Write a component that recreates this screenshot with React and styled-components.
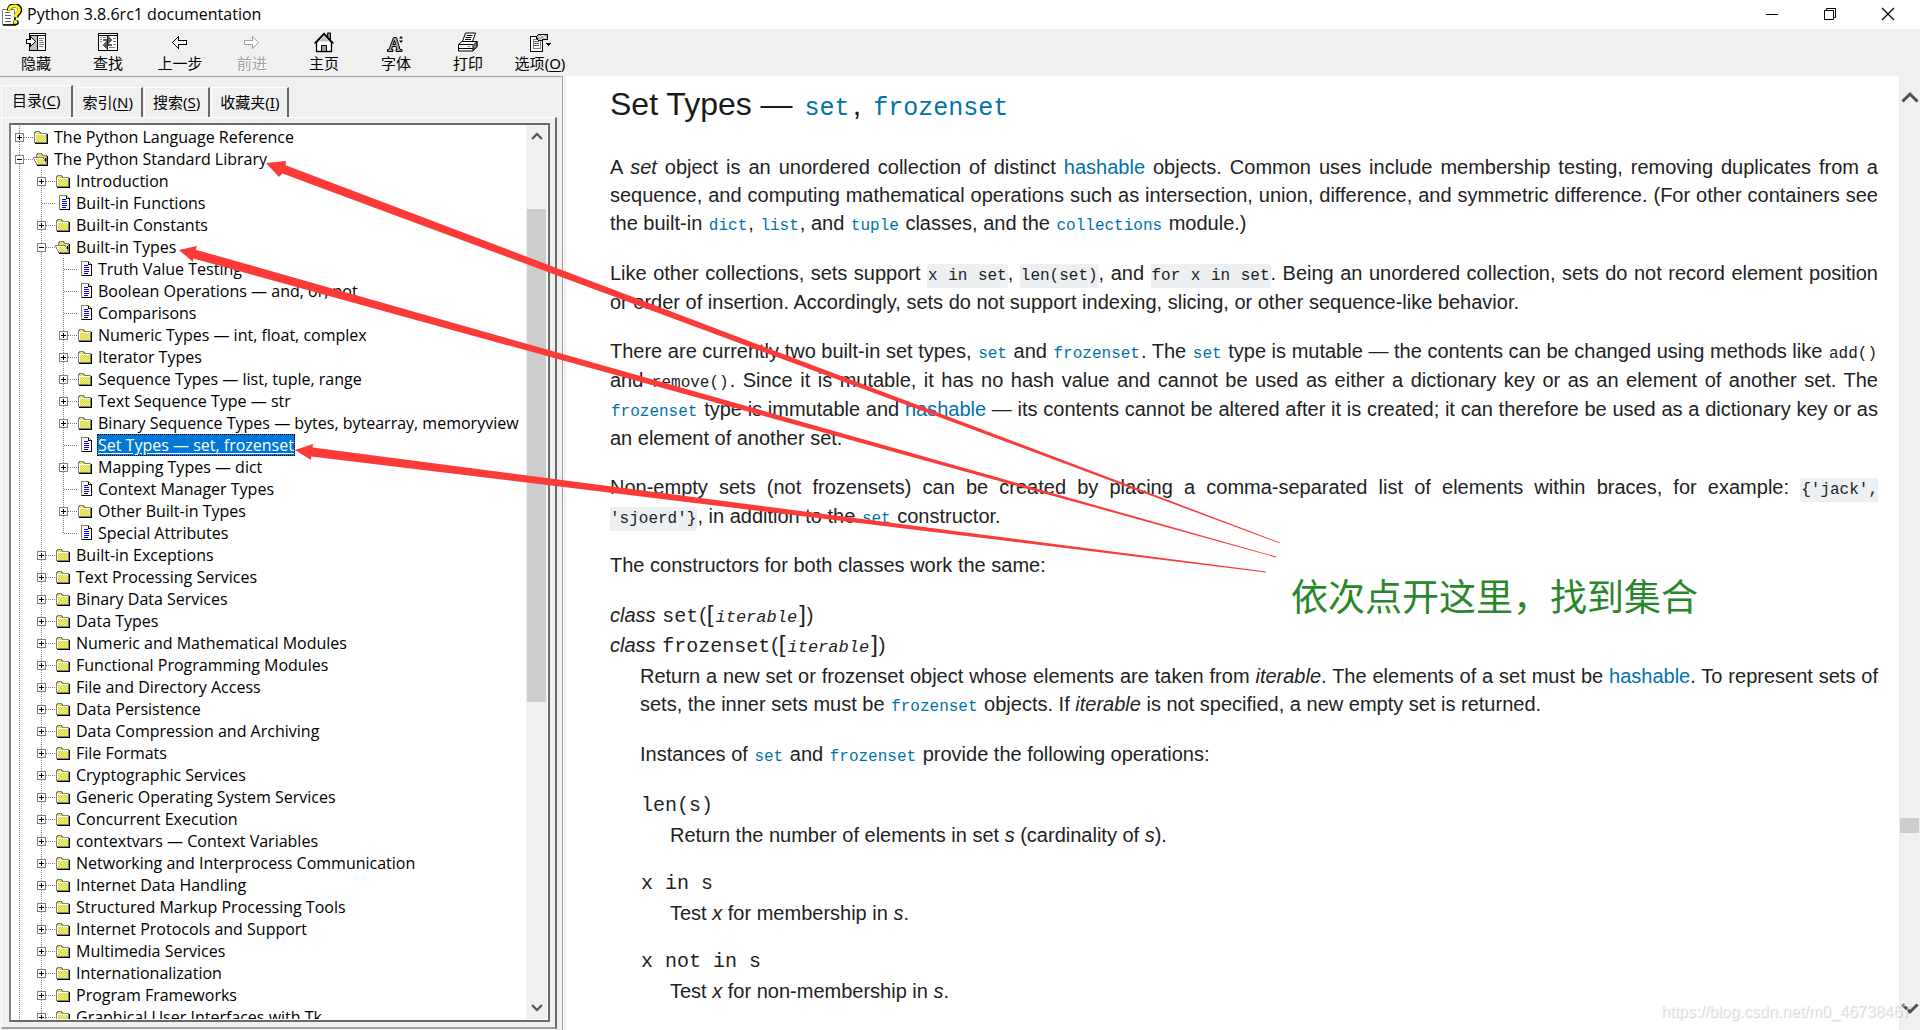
import React, { useState } from "react";
import styled, { createGlobalStyle } from "styled-components";

const GlobalStyle = createGlobalStyle`
    *, *::before, *::after {
        box-sizing: border-box;
    }
    body {
        margin: 0;
        overflow: hidden;
        background: #fff;
        --ui-font: "Noto Sans", "Noto Sans CJK SC", sans-serif;
        --label-font: "Open Sans", "Noto Sans CJK SC", sans-serif;
        --doc-font: "Liberation Sans", Arial, sans-serif;
        --code-font: "Liberation Mono", monospace;
        --color-face: #f0f0f0;
        --color-shadow: #a0a0a0;
        --color-dark: #696969;
        --color-link: #0072aa;
    }
    button {
        border: none;
        padding: 0;
        background: transparent;
        color: inherit;
        font: inherit;
    }
`;

const Window = styled.div`
    position: relative;
    display: flex;
    flex-direction: column;
    height: 100vh;
    overflow: hidden;
    font-family: var(--ui-font);
    font-size: 15px;
    color: #000;
`;

/* title bar */

const TitleBar = styled.header`
    display: flex;
    align-items: center;
    flex: 0 0 29px;
    padding-right: 3px;
    padding-left: 2px;
    background: #fff;
`;

const Title = styled.h1`
    flex: 1;
    margin: 0 0 2px 5px;
    font-family: var(--label-font);
    font-size: 16px;
    line-height: 20px;
    font-weight: 400;
`;

const WindowButton = styled.button`
    display: flex;
    align-items: center;
    justify-content: center;
    width: 58px;
    height: 29px;
    padding-bottom: 2px;
`;

/* toolbar */

const Toolbar = styled.div`
    display: flex;
    flex: 0 0 47px;
    background: var(--color-face);
`;

const ToolButton = styled.button`
    display: flex;
    flex-direction: column;
    align-items: center;
    width: 72px;
    padding-top: 2px;
    line-height: 20px;
    white-space: nowrap;
    color: ${({ disabled }) => (disabled ? "#a0a0a0" : "#000")};
    text-shadow: ${({ disabled }) => (disabled ? "1px 1px 0 #fff" : "none")};
`;

const Key = styled.span`
    text-decoration: underline;
    text-underline-offset: 2px;
`;

/* panes */

const Main = styled.div`
    display: flex;
    flex: 1;
    min-height: 0;
`;

const NavPane = styled.nav`
    display: flex;
    flex-direction: column;
    flex: 0 0 563px;
    padding: 8px 5px 1px 1px;
    border-top: 1px solid var(--color-shadow);
    border-right: 1px solid var(--color-shadow);
    background: var(--color-face);
`;

const Splitter = styled.div`
    flex: 0 0 3px;
    border-left: 1px solid #fff;
    background: var(--color-face);
`;

const TabList = styled.div`
    display: flex;
    align-items: flex-end;
    height: 32px;
`;

const Tab = styled.button`
    height: ${({ $active }) => ($active ? 32 : 30)}px;
    margin-right: 1px;
    padding: 0 ${({ $active }) => ($active ? "10px 4px" : "8px 2px")};
    border-top: 1px solid #fff;
    border-left: 1px solid #fff;
    border-right: 2px solid var(--color-dark);
    line-height: 26px;
    white-space: nowrap;
`;

const TabPanel = styled.div`
    flex: 1;
    min-height: 0;
    padding: 5px 5px 5px 7px;
    border-top: 1px solid #fff;
    border-left: 1px solid #fff;
    border-right: 2px solid var(--color-dark);
    border-bottom: 2px solid var(--color-shadow);
`;

const TreeBox = styled.div`
    display: flex;
    height: 100%;
    padding: 0 1px 1px 0;
    border: 2px solid var(--color-dark);
    border-left-color: #808080;
    background: #fff;
    overflow: hidden;
`;

const TreeList = styled.ul`
    flex: 1;
    min-width: 0;
    margin: 0;
    padding: 1px 0 0;
    list-style: none;
    overflow: hidden;
`;

const TreeRow = styled.li`
    display: flex;
    height: 22px;
`;

const TreeIconSlot = styled.span`
    flex: 0 0 20px;
    height: 22px;
`;

const TreeLabel = styled.button`
    height: 22px;
    padding: 0 1px;
    font-family: var(--label-font);
    font-size: 16px;
    line-height: 22px;
    white-space: nowrap;
    color: ${({ $selected }) => ($selected ? "#fff" : "#000")};
    background: ${({ $selected }) => ($selected ? "#0078d7" : "transparent")};
    outline: ${({ $selected }) => ($selected ? "1px dotted #000" : "none")};
    outline-offset: -1px;
    text-decoration: ${({ $selected }) => ($selected ? "underline" : "none")};
    text-underline-offset: 2px;
`;

const Scrollbar = styled.div`
    display: flex;
    flex-direction: column;
    align-items: center;
    flex: 0 0 ${({ $width }) => $width}px;
    background: var(--color-face);
`;

const ScrollButton = styled.button`
    display: flex;
    align-items: center;
    justify-content: center;
    width: 100%;
    height: ${({ $size }) => $size}px;
`;

const ScrollTrack = styled.div`
    display: flex;
    flex-direction: column;
    flex: 1;
    width: 100%;
    padding: 0 1px;
`;

const ScrollSpace = styled.div`
    flex: ${({ $grow }) => $grow};
`;

const ScrollThumb = styled.div`
    flex: ${({ $grow }) => $grow};
    background: #cdcdcd;
`;

/* document */

const DocPane = styled.main`
    flex: 1;
    min-width: 0;
    padding: 6px 21px 0 44px;
    overflow: hidden;
    background: #fff;
    color: #222;
    font-family: var(--doc-font);
    font-size: 20px;
    line-height: 28px;
    text-align: justify;
`;

const DocTitle = styled.h2`
    margin: 0 0 27px;
    font-size: 32px;
    line-height: 44px;
    font-weight: 400;
    color: #1a1a1a;
`;

const Paragraph = styled.p`
    margin: 0 0 ${({ $loose }) => ($loose ? 20 : 22)}px;
    line-height: ${({ $loose }) => ($loose ? 29 : 28)}px;
`;

const Link = styled.a`
    color: var(--color-link);
    text-decoration: none;
`;

const Code = styled.code`
    padding: 0 1px;
    font-family: var(--code-font);
    font-size: 16px;
    line-height: 20px;
`;

const CodeBox = styled(Code)`
    padding: 3px 1px;
    border-radius: 3px;
    background: #ecf0f3;
`;

const TitleCode = styled.code`
    padding: 0 3px;
    font-family: var(--code-font);
    font-size: 25px;
    line-height: 30px;
`;

const Definition = styled.dl`
    margin: 0 0 18px;
`;

const Signature = styled.dt`
    line-height: 30px;
    text-align: left;
`;

const Name = styled.code`
    padding: 0 1px;
    font-family: var(--code-font);
    font-size: 20px;
    line-height: 20px;
`;

const Bracket = styled.span`
    padding: 0 1px;
    font-size: 24px;
    line-height: 20px;
`;

const Param = styled.em`
    padding: 0 1px;
    font-family: var(--code-font);
    font-size: 17px;
    line-height: 20px;
`;

const Description = styled.dd`
    margin: 0 0 0 30px;
    padding-top: 2px;
`;

/* annotations */

const Arrows = styled.svg`
    position: absolute;
    top: 0;
    left: 0;
    pointer-events: none;
`;

const Note = styled.p`
    position: absolute;
    top: 568px;
    left: 1291px;
    margin: 0;
    font-family: "Noto Sans CJK SC", sans-serif;
    font-size: 37px;
    line-height: 54px;
    white-space: nowrap;
    color: #2a862a;
`;

const Watermark = styled.span`
    position: absolute;
    right: 9px;
    bottom: 8px;
    font-family: var(--doc-font);
    font-size: 16px;
    line-height: 20px;
    color: rgba(255, 255, 255, 0.7);
    text-shadow: 1px 1px 1px rgba(0, 0, 0, 0.2);
`;

function HelpIcon() {
    return (
        <svg width="20" height="22" viewBox="0 0 20 22">
            <path d="M.5 5.500h12v15H.5z" fill="#fff" stroke="#808080" />
            <path d="M13 9v12H1" fill="none" stroke="#000" strokeWidth="1.500" />
            <path d="M3 8.500h5M3 11.500h6M3 14.500h6M3 17.500h6" stroke="#606060" />
            <path d="M7 6.500C7 3 9.500 1.500 12.500 1.500S18 3.200 18 6c0 2.500-1.800 3.500-3.600 5v2.500" fill="none" stroke="#000" strokeWidth="4.600" />
            <circle cx="14" cy="18.500" r="2.800" fill="#000" />
            <path d="M7.300 6.500C7.300 3.500 9.500 2 12.300 2s5 1.700 5 4c0 2.300-1.800 3.200-3.600 4.700v2.500" fill="none" stroke="#fff200" strokeWidth="3.200" />
            <circle cx="13.500" cy="18" r="2" fill="#fff200" />
        </svg>
    );
}

function HideIcon() {
    return (
        <svg width="24" height="22" viewBox="0 0 24 22" shapeRendering="crispEdges">
            <path d="M5 2h17v18H5z" fill="#000" />
            <path d="M6 5h7v14H6z" fill="#c0c0c0" />
            <path d="M14 5h7v14h-7zM6 3h15v1H6z" fill="#fff" />
            <path d="M15 7h5v1h-5zM15 9h4v1h-4zM15 11h5v1h-5zM15 13h5v1h-5zM15 15h4v1h-4z" fill="#808080" />
            <path d="M2.500 8.500h4v-3l5 5-5 5v-3h-4z" fill="#fff" stroke="#000" />
        </svg>
    );
}

function LocateIcon() {
    return (
        <svg width="24" height="22" viewBox="0 0 24 22" shapeRendering="crispEdges">
            <path d="M2 2h20v18H2z" fill="#000" />
            <path d="M3 5h8v14H3zM12 5h9v14h-9zM3 3h18v1H3z" fill="#fff" />
            <path d="M4 6h2v1H4zM7 6h3v1H7zM4 8h2v1H4zM4 10h2v1H4zM13 13h3v1h-3zM17 10h3v1h-3zM17 7h3v1h-3zM13 16h6v1h-6zM17 13h3v1h-3z" fill="#808080" />
            <path d="M7 8h5V5l5 4-5 4v-3H7zM16 15h-5v3l-5-4 5-4v3h5z" fill="#606060" />
            <path d="M11 5h1v14h-1z" fill="#202020" />
        </svg>
    );
}

function ArrowIcon({ forward }) {
    return (
        <svg width="24" height="22" viewBox="0 0 24 22" shapeRendering="crispEdges">
            <path
                d={forward
                    ? "M4.500 9.500h8v-4l6 6-6 6v-4h-8z"
                    : "M18.500 9.500h-8v-4l-6 6 6 6v-4h8z"}
                fill="#fff"
                stroke={forward ? "#a0a0a0" : "#000"}
            />
        </svg>
    );
}

function HomeIcon() {
    return (
        <svg width="24" height="22" viewBox="0 0 24 22">
            <path d="M15.500 2h3v7h-3z" fill="#808080" stroke="#000" />
            <path d="M4.500 11.500L12 3l7.500 8.500v9h-15z" fill="#fff" stroke="#000" strokeWidth="1.300" />
            <path d="M2.500 12.500L12 2.500l9.500 10" fill="none" stroke="#000" strokeWidth="1.300" />
            <path d="M7 10.500l5-5.500 5 5.500z" fill="#c0c0c0" />
            <path d="M9.500 14.500h5v6h-5z" fill="#a0a0a0" stroke="#000" />
        </svg>
    );
}

function FontIcon() {
    return (
        <svg width="24" height="22" viewBox="0 0 24 22">
            <path d="M3.500 20.500v-2h1.500l4.500-12h3l3.500 12h2v2h-6v-2h1l-1-3H8.500l-1 3h1.500v2z" fill="#a8a8a8" stroke="#000" />
            <path d="M10.500 9.500l-1.500 4h2.500z" fill="#f0f0f0" stroke="#000" />
            <path d="M15 7.500L17 5l2 2.500zM15 9.500h4l-2 2.500z" fill="#000" />
        </svg>
    );
}

function PrintIcon() {
    return (
        <svg width="24" height="22" viewBox="0 0 24 22">
            <path d="M6.500 10.500l3-8.500h10l-3 8.500z" fill="#fff" stroke="#000" />
            <path d="M10.500 4.500h6M9.500 6.500h6M9 8.500h6" stroke="#000" />
            <path d="M2.500 13.500l3.500-3h15v5l-4 4.500h-14.500z" fill="#fff" stroke="#000" />
            <path d="M17 14.500l4-4v5l-4 4.500z" fill="#808080" stroke="#000" />
            <path d="M2.500 13.500h14.500M2.500 17.500h14.500" stroke="#000" />
            <path d="M11.500 15.500h3" stroke="#808080" />
        </svg>
    );
}

function OptionsIcon() {
    return (
        <svg width="24" height="22" viewBox="0 0 24 22" shapeRendering="crispEdges">
            <path d="M2.500 5.500h12v15h-12z" fill="#fff" stroke="#000" />
            <path d="M14 6h1v15H3v-1h11z" fill="#000" />
            <path d="M5 8.500h7v9H5z" fill="#fff" stroke="#808080" />
            <path d="M6 10.500h5M6 12.500h5M6 14.500h5" stroke="#606060" />
            <path d="M8 6l3-3h8v5h-4l-2 2-3-1z" fill="#b8b8b8" stroke="#000" />
            <path d="M11 5h2v1h-2zM14 4h2v1h-2zM16 6h2v1h-2z" fill="#fff" />
            <path d="M18 12h5v1h-1v1h-1v1h-1v-1h-1v-1h-1z" fill="#000" />
        </svg>
    );
}

function Chevron({ up, size = 12, weight = 2 }) {
    return (
        <svg width={size} height={size} viewBox="0 0 12 12">
            <path d={up ? "M1 9l5-5 5 5" : "M1 3l5 5 5-5"} fill="none" stroke="#505050" strokeWidth={weight} />
        </svg>
    );
}

function FolderIcon({ open }) {
    return (
        <svg width="20" height="22" viewBox="0 0 20 22" shapeRendering="crispEdges">
            <defs>
                <pattern id="dither" width="2" height="2" patternUnits="userSpaceOnUse">
                    <path d="M0 0h2v2H0z" fill="#ffff00" />
                    <path d="M0 0h1v1H0zM1 1h1v1H1z" fill="#c8c8c0" />
                </pattern>
            </defs>
            {open ? (
                <>
                    <path d="M3.500 16.500v-9l1-2h4l1 2h4v9z" fill="url(#dither)" stroke="#808080" />
                    <path d="M.5 9.500h10l3 7h-10z" fill="#fff" stroke="#808080" />
                    <path d="M3 11h7l3 5H5z" fill="url(#dither)" />
                    <path d="M14 8h1v10H4v-1h10zM12 10h1v3h-1z" fill="#000" />
                </>
            ) : (
                <>
                    <path d="M1.500 16.500v-9l1-2h4l1 2h6v9z" fill="url(#dither)" stroke="#808080" />
                    <path d="M2 8h11v1H2zM2 8h1v8H2z" fill="#fff" />
                    <path d="M14 8h1v10H2v-1h12z" fill="#000" />
                </>
            )}
        </svg>
    );
}

function PageIcon() {
    return (
        <svg width="20" height="22" viewBox="0 0 20 22" shapeRendering="crispEdges">
            <path d="M4.500 3.500h7l3 3v11h-10z" fill="#fff" stroke="#808080" />
            <path d="M11 4h1v2h2v1h-3zM14 6h1v12H5v-1h9z" fill="#000" />
            <path d="M6 5h1v1H6zM9 4h1v1H9zM5 8h1v1H5zM5 12h1v1H5zM6 15h1v1H6zM12 8h1v1h-1zM12 12h1v1h-1z" fill="#ffff00" />
            <path d="M7 7h4v1H7zM7 9h5v1H7zM7 11h5v1H7zM7 13h5v1H7zM7 15h4v1H7z" fill="#0000ff" />
        </svg>
    );
}

// one 22px cell of the dotted connector lines, with the +/- box where the node has one
function Branch({ line = "full", stub, box }) {
    const paths = { full: "M8.500 0V22", end: "M8.500 0V12" };
    return (
        <svg width="22" height="22" viewBox="0 0 22 22" shapeRendering="crispEdges">
            <path d={paths[line]} stroke="#808080" strokeDasharray="1 1" />
            {stub && <path d="M9 11.500H22" stroke="#808080" strokeDasharray="1 1" />}
            {box && (
                <>
                    <path d="M4.500 7.500h8v8h-8z" fill="#fff" stroke="#808080" />
                    <path d={box === "+" ? "M6 11.500h5M8.500 9v5" : "M6 11.500h5"} stroke="#000" />
                </>
            )}
        </svg>
    );
}

// level, kind, label
const ROWS = [
    [0, "folder", "The Python Language Reference"],
    [0, "open", "The Python Standard Library"],
    [1, "folder", "Introduction"],
    [1, "page", "Built-in Functions"],
    [1, "folder", "Built-in Constants"],
    [1, "open", "Built-in Types"],
    [2, "page", "Truth Value Testing"],
    [2, "page", "Boolean Operations — and, or, not"],
    [2, "page", "Comparisons"],
    [2, "folder", "Numeric Types — int, float, complex"],
    [2, "folder", "Iterator Types"],
    [2, "folder", "Sequence Types — list, tuple, range"],
    [2, "folder", "Text Sequence Type — str"],
    [2, "folder", "Binary Sequence Types — bytes, bytearray, memoryview"],
    [2, "page", "Set Types — set, frozenset"],
    [2, "folder", "Mapping Types — dict"],
    [2, "page", "Context Manager Types"],
    [2, "folder", "Other Built-in Types"],
    [2, "page", "Special Attributes"],
    [1, "folder", "Built-in Exceptions"],
    [1, "folder", "Text Processing Services"],
    [1, "folder", "Binary Data Services"],
    [1, "folder", "Data Types"],
    [1, "folder", "Numeric and Mathematical Modules"],
    [1, "folder", "Functional Programming Modules"],
    [1, "folder", "File and Directory Access"],
    [1, "folder", "Data Persistence"],
    [1, "folder", "Data Compression and Archiving"],
    [1, "folder", "File Formats"],
    [1, "folder", "Cryptographic Services"],
    [1, "folder", "Generic Operating System Services"],
    [1, "folder", "Concurrent Execution"],
    [1, "folder", "contextvars — Context Variables"],
    [1, "folder", "Networking and Interprocess Communication"],
    [1, "folder", "Internet Data Handling"],
    [1, "folder", "Structured Markup Processing Tools"],
    [1, "folder", "Internet Protocols and Support"],
    [1, "folder", "Multimedia Services"],
    [1, "folder", "Internationalization"],
    [1, "folder", "Program Frameworks"],
    [1, "folder", "Graphical User Interfaces with Tk"],
];

const TOOLS = [
    { label: "隐藏", icon: <HideIcon /> },
    { label: "查找", icon: <LocateIcon /> },
    { label: "上一步", icon: <ArrowIcon /> },
    { label: "前进", icon: <ArrowIcon forward />, disabled: true },
    { label: "主页", icon: <HomeIcon /> },
    { label: "字体", icon: <FontIcon /> },
    { label: "打印", icon: <PrintIcon /> },
    { label: "选项", icon: <OptionsIcon />, hotkey: "O" },
];

const TABS = [
    ["目录", "C"],
    ["索引", "N"],
    ["搜索", "S"],
    ["收藏夹", "I"],
];

function Tree() {
    const [selected, setSelected] = useState("Set Types — set, frozenset");
    return (
        <TreeList>
            {ROWS.map(([level, kind, label], index) => {
                const next = ROWS[index + 1];
                const isLast = level === 2 && next[0] < 2;
                const box = { folder: "+", open: "-" }[kind];
                return (
                    <TreeRow key={label}>
                        {Array.from({ length: level }, (_, i) => <Branch key={i} />)}
                        <Branch line={isLast ? "end" : "full"} stub box={box} />
                        <TreeIconSlot>
                            {kind === "page" ? <PageIcon /> : <FolderIcon open={kind === "open"} />}
                        </TreeIconSlot>
                        <TreeLabel $selected={label === selected} onClick={() => setSelected(label)}>
                            {label}
                        </TreeLabel>
                    </TreeRow>
                );
            })}
        </TreeList>
    );
}

function CodeLink({ children }) {
    return <Link href="#"><Code>{children}</Code></Link>;
}

function Constructor({ name }) {
    return (
        <Signature>
            <em>class</em> <Name>{name}</Name>(<Bracket>[</Bracket>
            <Param>iterable</Param>
            <Bracket>]</Bracket>)
        </Signature>
    );
}

function Document() {
    return (
        <DocPane>
            <DocTitle>
                Set Types — <Link href="#"><TitleCode>set</TitleCode></Link>, <Link href="#"><TitleCode>frozenset</TitleCode></Link>
            </DocTitle>
            <Paragraph>
                A <em>set</em> object is an unordered collection of distinct <Link href="#">hashable</Link> objects.
                Common uses include membership testing, removing duplicates from a sequence, and computing
                mathematical operations such as intersection, union, difference, and symmetric difference.
                (For other containers see the built-in <CodeLink>dict</CodeLink>, <CodeLink>list</CodeLink>,
                and <CodeLink>tuple</CodeLink> classes, and the <CodeLink>collections</CodeLink> module.)
            </Paragraph>
            <Paragraph $loose>
                Like other collections, sets support <CodeBox>x in set</CodeBox>, <CodeBox>len(set)</CodeBox>,
                and <CodeBox>for x in set</CodeBox>. Being an unordered collection, sets do not record element
                position or order of insertion. Accordingly, sets do not support indexing, slicing, or other
                sequence-like behavior.
            </Paragraph>
            <Paragraph $loose>
                There are currently two built-in set types, <CodeLink>set</CodeLink> and <CodeLink>frozenset</CodeLink>.
                The <CodeLink>set</CodeLink> type is mutable — the contents can be changed using methods
                like <Code>add()</Code> and <Code>remove()</Code>. Since it is mutable, it has no hash value and
                cannot be used as either a dictionary key or as an element of another set.
                The <CodeLink>frozenset</CodeLink> type is immutable and <Link href="#">hashable</Link> — its
                contents cannot be altered after it is created; it can therefore be used as a dictionary key or as an
                element of another set.
            </Paragraph>
            <Paragraph $loose>
                Non-empty sets (not frozensets) can be created by placing a comma-separated list of elements within
                braces, for example: <CodeBox>{"{'jack', 'sjoerd'}"}</CodeBox>, in addition to
                the <CodeLink>set</CodeLink> constructor.
            </Paragraph>
            <Paragraph $loose>The constructors for both classes work the same:</Paragraph>
            <Definition>
                <Constructor name="set" />
                <Constructor name="frozenset" />
                <Description>
                    <Paragraph>
                        Return a new set or frozenset object whose elements are taken from <em>iterable</em>. The
                        elements of a set must be <Link href="#">hashable</Link>. To represent sets of sets, the inner
                        sets must be <CodeLink>frozenset</CodeLink> objects. If <em>iterable</em> is not specified, a
                        new empty set is returned.
                    </Paragraph>
                    <Paragraph $loose>
                        Instances of <CodeLink>set</CodeLink> and <CodeLink>frozenset</CodeLink> provide the following
                        operations:
                    </Paragraph>
                    <Definition>
                        <Signature><Name>len(s)</Name></Signature>
                        <Description>
                            Return the number of elements in set <em>s</em> (cardinality of <em>s</em>).
                        </Description>
                    </Definition>
                    <Definition>
                        <Signature><Name>x in s</Name></Signature>
                        <Description>Test <em>x</em> for membership in <em>s</em>.</Description>
                    </Definition>
                    <Definition>
                        <Signature><Name>x not in s</Name></Signature>
                        <Description>Test <em>x</em> for non-membership in <em>s</em>.</Description>
                    </Definition>
                    <Definition>
                        <Signature><Name>isdisjoint</Name>(<Param>other</Param>)</Signature>
                    </Definition>
                </Description>
            </Definition>
        </DocPane>
    );
}

function App() {
    const [activeTab, setActiveTab] = useState("C");
    return (
        <Window>
            <GlobalStyle />
            <TitleBar>
                <HelpIcon />
                <Title>Python 3.8.6rc1 documentation</Title>
                <WindowButton aria-label="Minimize">
                    <svg width="14" height="14"><path d="M1 7.500h12" stroke="#000" /></svg>
                </WindowButton>
                <WindowButton aria-label="Restore">
                    <svg width="14" height="14" fill="none" stroke="#000">
                        <path d="M1.500 3.500h9v9h-9zM3.500 3.500v-2h9v9h-2" />
                    </svg>
                </WindowButton>
                <WindowButton aria-label="Close">
                    <svg width="14" height="14"><path d="M1 1l12 12M13 1L1 13" stroke="#000" strokeWidth="1.200" /></svg>
                </WindowButton>
            </TitleBar>
            <Toolbar>
                {TOOLS.map(({ label, icon, hotkey, disabled }) => (
                    <ToolButton key={label} disabled={disabled}>
                        {icon}
                        <span>{label}{hotkey && <>(<Key>{hotkey}</Key>)</>}</span>
                    </ToolButton>
                ))}
            </Toolbar>
            <Main>
                <NavPane>
                    <TabList role="tablist">
                        {TABS.map(([label, hotkey]) => (
                            <Tab
                                key={hotkey}
                                role="tab"
                                aria-selected={activeTab === hotkey}
                                $active={activeTab === hotkey}
                                onClick={() => setActiveTab(hotkey)}>
                                {label}(<Key>{hotkey}</Key>)
                            </Tab>
                        ))}
                    </TabList>
                    <TabPanel>
                        <TreeBox>
                            <Tree />
                            <Scrollbar $width={21}>
                                <ScrollButton $size={22} aria-label="Scroll up"><Chevron up /></ScrollButton>
                                <ScrollTrack>
                                    <ScrollSpace $grow={62} />
                                    <ScrollThumb $grow={493} />
                                    <ScrollSpace $grow={295} />
                                </ScrollTrack>
                                <ScrollButton $size={22} aria-label="Scroll down"><Chevron /></ScrollButton>
                            </Scrollbar>
                        </TreeBox>
                    </TabPanel>
                </NavPane>
                <Splitter />
                <Document />
                <Scrollbar $width={21}>
                    <ScrollButton $size={42} aria-label="Page up"><Chevron up size={18} weight={2} /></ScrollButton>
                    <ScrollTrack>
                        <ScrollSpace $grow={700} />
                        <ScrollThumb $grow={15} />
                        <ScrollSpace $grow={155} />
                    </ScrollTrack>
                    <ScrollButton $size={42} aria-label="Page down"><Chevron size={18} weight={2} /></ScrollButton>
                </Scrollbar>
            </Main>
            <Arrows width="1920" height="1030" fill="#fc3a38">
                <path d="M266 163L286 161L285.600 165.200L1280 542.500L1279.600 543.300L282.400 173.600L279 177z" />
                <path d="M179 250L197 246L195.700 249.700L1276.200 556.600L1275.800 557.400L193.300 258.400L193 262z" />
                <path d="M295 450L313 444L312.600 447.500L1266 571.600V572.400L311.400 456.500L311 460z" />
            </Arrows>
            <Note>依次点开这里，找到集合</Note>
            <Watermark>https://blog.csdn.net/m0_46738467</Watermark>
        </Window>
    );
}

export default App;
